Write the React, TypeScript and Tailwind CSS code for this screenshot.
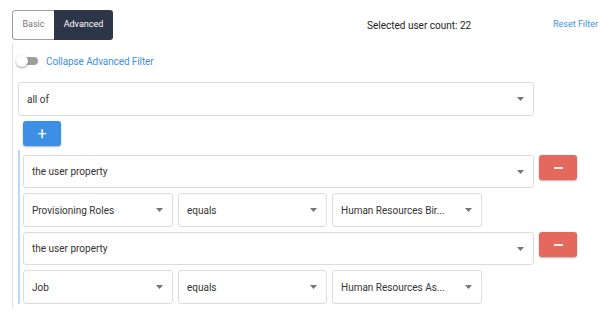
import React from "react";

const Arrow = () => (
  <svg width="7" height="4" viewBox="0 0 7 4" className="shrink-0">
    <path d="M0 0 L7 0 L3.5 4 Z" fill="#757575" />
  </svg>
);

const Select = ({ text, className = "" }: { text: string; className?: string }) => (
  <div
    className={`shrink-0 flex items-center justify-between border border-[#dcdcdc] rounded-[3px] bg-white pl-[8px] pr-[9px] text-[10px] text-[#333] ${className}`}
  >
    <span className="whitespace-nowrap">{text}</span>
    <Arrow />
  </div>
);

const Minus = () => (
  <button className="shrink-0 w-[38px] h-[25px] ml-[5px] rounded-[3px] bg-[#e4685b] shadow-[0_1px_2px_rgba(0,0,0,0.3)] flex items-center justify-center">
    <span className="block w-[9px] h-[2px] bg-white/90" />
  </button>
);

const Condition = ({ field, value }: { field: string; value: string }) => (
  <div className="flex flex-col gap-[5px]">
    <div className="flex items-start">
      <Select text="the user property" className="w-[511px] h-[33px]" />
      <Minus />
    </div>
    <div className="flex gap-[5px]">
      <Select text={field} className="w-[150px] h-[34px]" />
      <Select text="equals" className="w-[149px] h-[34px]" />
      <Select text={value} className="w-[150px] h-[34px]" />
    </div>
  </div>
);

export default function App() {
  return (
    <div className="w-[615px] h-[317px] bg-white overflow-hidden" style={{ fontFamily: "Roboto, 'Noto Sans', sans-serif" }}>
      <div className="flex items-center pt-[10px] pl-[12px] pr-[17px]">
        <div className="flex h-[30px] rounded-[3px] overflow-hidden text-[9px]">
          <div className="w-[42px] flex items-center justify-center border border-[#9e9e9e] border-r-0 rounded-l-[3px] text-[#777]">Basic</div>
          <div className="w-[59px] flex items-center justify-center bg-[#2d3548] text-white">Advanced</div>
        </div>
        <div className="ml-[254px] text-[10px] text-[#222]">Selected user count: 22</div>
        <div className="ml-auto text-[9px] text-[#3d8fe6]">Reset Filter</div>
      </div>
      <div className="ml-[12px] mt-[3px] border-l border-[#e0e0e0] pl-[5px] pb-[4px]">
        <div className="flex items-center h-[36px]">
          <div className="relative w-[20px] h-[8px] rounded-full bg-[#9e9e9e]">
            <div className="absolute left-[-2px] top-[-2px] w-[12px] h-[12px] rounded-full bg-white shadow-[0_1px_2px_rgba(0,0,0,0.4)]" />
          </div>
          <span className="ml-[8px] text-[10px] tracking-[-0.1px] text-[#3d8fe6]">Collapse Advanced Filter</span>
        </div>
        <div className="mt-[3px]">
          <Select text="all of" className="w-[516px] h-[34px]" />
        </div>
        <button className="ml-[5px] mt-[5px] w-[38px] h-[25px] rounded-[3px] bg-[#3d8fe6] shadow-[0_1px_2px_rgba(0,0,0,0.3)] flex items-center justify-center text-white text-[16px] leading-none">
          +
        </button>
        <div className="mt-[4px] border-l-2 border-[#bcd8f5] pl-[3px] pt-[5px] flex flex-col gap-[5px]">
          <Condition field="Provisioning Roles" value="Human Resources Bir..." />
          <Condition field="Job" value="Human Resources As..." />
        </div>
      </div>
    </div>
  );
}
